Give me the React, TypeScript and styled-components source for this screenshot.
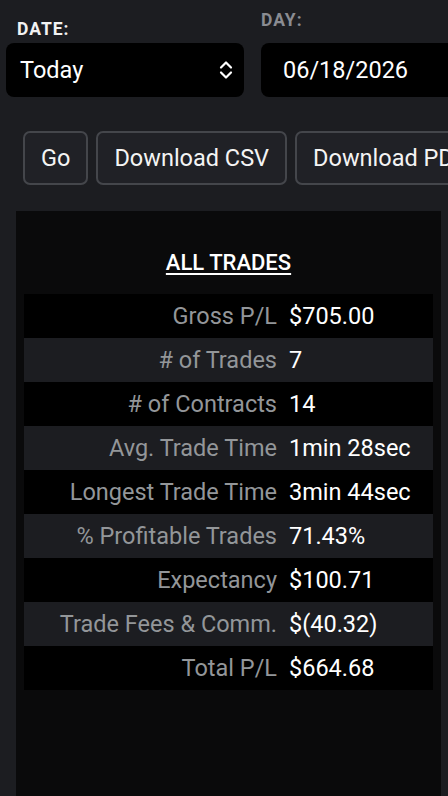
import React from 'react';
import styled, {createGlobalStyle} from 'styled-components';

const GlobalStyle = createGlobalStyle`
    html, body {
        margin:0;
        padding:0;
        background:#1c1d21;
        overflow:hidden;
    }
    body {
        font-family:Roboto, "Liberation Sans", sans-serif;
        color:#ffffff;
    }
`

const Page = styled.div`
    width:448px;
    height:796px;
    overflow:hidden;
`

const FilterRow = styled.div`
    display:flex;
    align-items:flex-end;
    gap:17px;
    padding:0 0 0 6px;
    width:max-content;
`

const Field = styled.div`
    display:flex;
    flex-direction:column;
`

const Label = styled.label<{$dim?: boolean; $indent?: number}>`
    font-size:17.5px;
    font-weight:700;
    letter-spacing:1px;
    line-height:20px;
    color:${p => p.$dim ? '#8a8c92' : '#f2f2f2'};
    margin:${p => p.$dim ? 10 : 19}px 0 ${p => p.$dim ? 13 : 4}px ${p => p.$indent || 0}px;
`

const Select = styled.div`
    display:flex;
    align-items:center;
    justify-content:space-between;
    box-sizing:border-box;
    width:238px;
    height:54px;
    padding:0 10px 0 14px;
    background:#000000;
    border-radius:8px;
    font-size:23.5px;
`

const DateBox = styled.div`
    display:flex;
    align-items:center;
    box-sizing:border-box;
    width:220px;
    height:54px;
    padding:0 0 0 22px;
    background:#000000;
    border-radius:8px;
    font-size:23.5px;
`

const ButtonRow = styled.div`
    display:flex;
    gap:8px;
    margin:34px 0 0 23px;
    width:max-content;
`

const Button = styled.button`
    box-sizing:border-box;
    height:54px;
    padding:0 16px;
    background:#202126;
    border:2px solid #44464b;
    border-radius:7px;
    color:#f4f4f4;
    font-family:Roboto, "Liberation Sans", sans-serif;
    font-size:23.5px;
`

const Panel = styled.div`
    box-sizing:border-box;
    width:425px;
    margin:26px 0 0 16px;
    padding:40px 8px 140px;
    background:#0a0a0b;
`

const Heading = styled.h2`
    margin:0 0 19px;
    text-align:center;
    font-size:22px;
    font-weight:500;
    line-height:24px;
    text-decoration:underline;
    text-underline-offset:3px;
    text-decoration-thickness:2px;
`

const Table = styled.div`
    display:grid;
    grid-template-columns:259px 1fr;
`

const Row = styled.div<{$alt: boolean}>`
    display:contents;
    & > div {
        background:${p => p.$alt ? '#1c1d21' : '#000000'};
    }
`

const Cell = styled.div<{$label?: boolean}>`
    height:44px;
    display:flex;
    align-items:center;
    justify-content:${p => p.$label ? 'flex-end' : 'flex-start'};
    padding:${p => p.$label ? '0 6px 0 0' : '0 0 0 6px'};
    font-size:23.5px;
    color:${p => p.$label ? '#939699' : '#ffffff'};
    white-space:nowrap;
`

function Chevrons() {
    return (
        <svg width="16" height="20" viewBox="0 0 16 20" fill="none" stroke="#ffffff" strokeWidth="2.2"
             strokeLinecap="round" strokeLinejoin="round">
            <path d="M3 7.5 L8 2.5 L13 7.5"/>
            <path d="M3 12.5 L8 17.5 L13 12.5"/>
        </svg>
    )
}

const stats: [string, string][] = [
    ['Gross P/L', '$705.00'],
    ['# of Trades', '7'],
    ['# of Contracts', '14'],
    ['Avg. Trade Time', '1min 28sec'],
    ['Longest Trade Time', '3min 44sec'],
    ['% Profitable Trades', '71.43%'],
    ['Expectancy', '$100.71'],
    ['Trade Fees & Comm.', '$(40.32)'],
    ['Total P/L', '$664.68'],
]

function App() {
    return (
        <Page>
            <GlobalStyle/>
            <FilterRow>
                <Field>
                    <Label $indent={11}>DATE:</Label>
                    <Select>
                        <span>Today</span>
                        <Chevrons/>
                    </Select>
                </Field>
                <Field>
                    <Label $dim>DAY:</Label>
                    <DateBox>06/18/2026</DateBox>
                </Field>
            </FilterRow>
            <ButtonRow>
                <Button>Go</Button>
                <Button>Download CSV</Button>
                <Button>Download PDF</Button>
            </ButtonRow>
            <Panel>
                <Heading>ALL TRADES</Heading>
                <Table>
                    {stats.map(([name, value], i) => (
                        <Row key={name} $alt={i % 2 === 1}>
                            <Cell $label>{name}</Cell>
                            <Cell>{value}</Cell>
                        </Row>
                    ))}
                </Table>
            </Panel>
        </Page>
    );
}

export default App;
